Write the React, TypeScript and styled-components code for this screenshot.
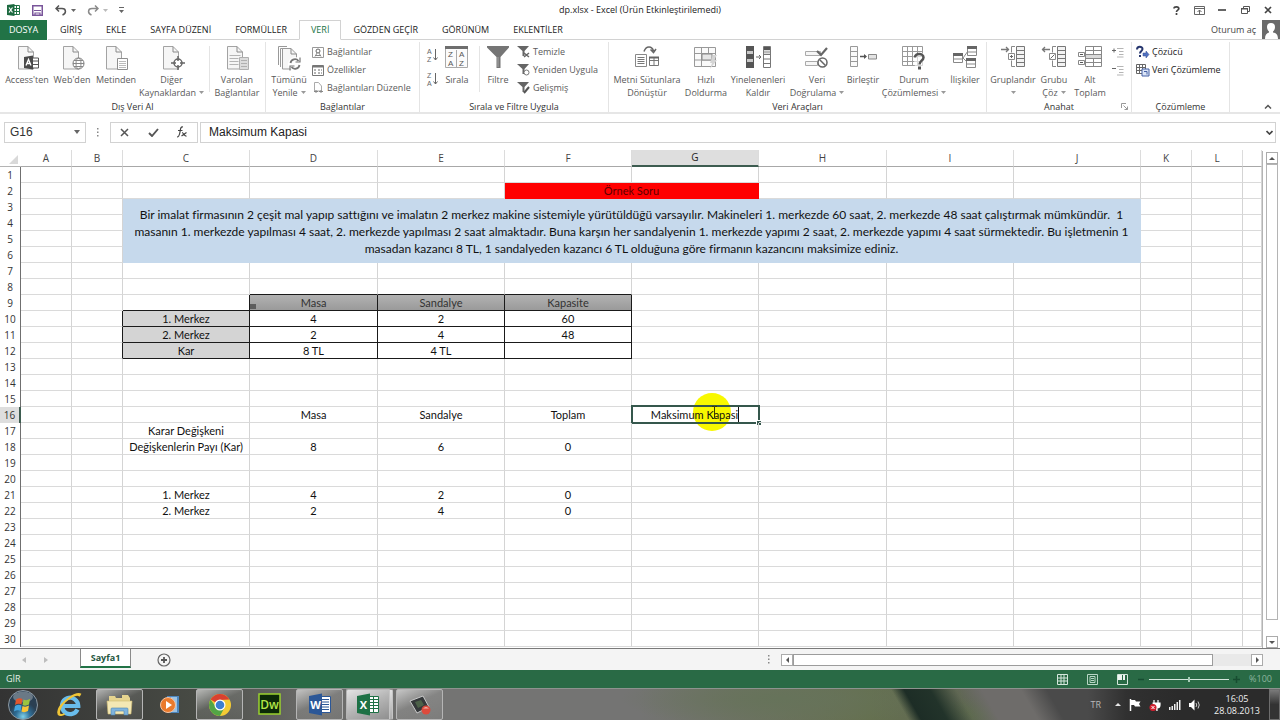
import React, { ReactNode } from 'react';
import styled, { createGlobalStyle, css } from 'styled-components';

const ui = '"Open Sans", "Noto Sans", sans-serif';
const sheetFont = 'Lato, "Open Sans", sans-serif';
const green = '#217346';

const GlobalStyle = createGlobalStyle`
  *, *::before, *::after { box-sizing: border-box; }
  body { margin: 0; background: #fff; font: 9px/12px ${ui}; color: #444; }
  button, input { font: inherit; color: inherit; margin: 0; padding: 0; border: 0; background: none; outline: none; }
  svg { display: block; flex: none; }
`;

const Window = styled.div`
  min-height: 100vh;
  display: flex;
  flex-direction: column;
`;

/* ---------- title bar ---------- */

const TitleBar = styled.header`
  height: 20px;
  display: grid;
  grid-template-columns: 1fr auto 1fr;
  align-items: center;
`;
const QuickAccess = styled.div`
  display: flex;
  align-items: center;
  padding-left: 7px;
`;
const QuickButton = styled.button<{ $gap?: number }>`
  display: flex;
  align-items: center;
  gap: 4px;
  margin-right: ${p => p.$gap ?? 0}px;
`;
const Title = styled.h1`
  margin: 0;
  font-size: 9px;
  font-weight: 400;
  color: #222;
`;
const WindowButtons = styled.div`
  display: flex;
  justify-content: flex-end;
  gap: 11px;
  padding-right: 6px;
`;
const IconButton = styled.button`
  display: flex;
  align-items: center;
  justify-content: center;
  min-width: 12px;
  min-height: 12px;
`;

/* ---------- ribbon tabs ---------- */

const TabRow = styled.nav`
  height: 20px;
  display: flex;
`;
const FileTab = styled.button`
  width: 47px;
  margin-right: 1px;
  background: ${green};
  color: #fff;
`;
const Tab = styled.button<{ $active?: boolean }>`
  padding: 0 12px;
  color: #222;
  border-bottom: 1px solid #d2d2d2;
  ${p => p.$active && css`
    padding: 0 11px;
    color: ${green};
    border: 1px solid #d2d2d2;
    border-bottom-color: #fff;
  `}
`;
const TabSpace = styled.div`
  flex: 1;
  display: flex;
  align-items: center;
  justify-content: flex-end;
  gap: 6px;
  border-bottom: 1px solid #d2d2d2;
`;

/* ---------- ribbon ---------- */

const Ribbon = styled.section`
  height: 74px;
  display: flex;
  padding-top: 2px;
  border-bottom: 2px solid #e6e6e6;
`;
const GroupBox = styled.div<{ $w: number }>`
  width: ${p => p.$w}px;
  flex: none;
  display: flex;
  flex-direction: column;
  position: relative;
  border-right: 1px solid #e4e4e4;
`;
const GroupBody = styled.div<{ $pad: number }>`
  height: 56px;
  flex: none;
  display: flex;
  padding-left: ${p => p.$pad}px;
`;
const GroupName = styled.div`
  padding-top: 3px;
  text-align: center;
  color: #333;
`;
const GroupLauncher = styled.button`
  position: absolute;
  right: 3px;
  bottom: 2px;
`;
const BigButtonBox = styled.button<{ $w: number }>`
  width: ${p => p.$w}px;
  flex: none;
  display: flex;
  flex-direction: column;
  align-items: center;
  padding-top: 4px;
  color: #5a5a5a;
  white-space: nowrap;
  line-height: 13px;
`;
const BigButtonText = styled.span`
  margin-top: 3px;
  display: flex;
  flex-direction: column;
  align-items: center;
`;
const BigLine = styled.span`
  display: flex;
  align-items: center;
  gap: 3px;
  min-height: 13px;
`;
const Divider = styled.span`
  width: 1px;
  margin: 4px 4px 6px 3px;
  background: #e4e4e4;
`;
const SmallColumn = styled.div<{ $ml?: number }>`
  display: flex;
  flex-direction: column;
  margin-left: ${p => p.$ml ?? 0}px;
`;
const SmallButton = styled.button<{ $strong?: boolean; $tall?: boolean }>`
  height: ${p => (p.$tall ? 24 : 18)}px;
  display: flex;
  align-items: center;
  gap: 3px;
  white-space: nowrap;
  padding-top: 2px;
  color: ${p => (p.$strong ? '#222' : '#5a5a5a')};
`;
const RibbonEnd = styled.div`
  flex: 1;
  display: flex;
  align-items: flex-end;
  justify-content: flex-end;
  padding-right: 6px;
`;

/* ---------- formula bar ---------- */

const FormulaRow = styled.section`
  height: 36px;
  display: flex;
  align-items: center;
  padding: 0 4px;
  font: 12px/16px "Liberation Sans", Arial, sans-serif;
  color: #333;
`;
const NameBox = styled.div`
  width: 82px;
  height: 21px;
  display: flex;
  align-items: center;
  padding: 0 2px 0 5px;
  border: 1px solid #d2d2d2;
`;
const NameInput = styled.input`
  flex: 1;
  min-width: 0;
`;
const BarDots = styled.span`
  width: 24px;
  display: flex;
  justify-content: center;
`;
const EditButtons = styled.div`
  width: 88px;
  height: 21px;
  display: flex;
  align-items: center;
  justify-content: space-between;
  padding: 0 9px 0 7px;
  border: 1px solid #d2d2d2;
`;
const FormulaBox = styled.div`
  flex: 1;
  height: 21px;
  margin-left: 2px;
  display: flex;
  align-items: center;
  padding-left: 8px;
  border: 1px solid #d2d2d2;
`;
const FormulaInput = styled.input`
  flex: 1;
  color: #222;
`;

/* ---------- worksheet ---------- */

const SheetArea = styled.main`
  flex: 1;
  display: flex;
  overflow: hidden;
  border-bottom: 1px solid #7a7a7a;
`;
const Grid = styled.table`
  flex: 1;
  width: 0;
  table-layout: fixed;
  border-collapse: separate;
  border-spacing: 0;
  align-self: flex-start;
  font: 11px/15px ${sheetFont};
  font-variant-ligatures: none;
  color: #111;
`;
const Col = styled.col<{ $w: number }>`
  width: ${p => p.$w}px;
`;
const Corner = styled.td`
  height: 17px;
  padding: 0;
  border-bottom: 1px solid #b4b4b4;
`;
const ColHead = styled.th<{ $active?: boolean }>`
  height: 17px;
  padding: 0;
  font: 10px/15px ${ui};
  color: #444;
  border-right: 1px solid #dcdcdc;
  border-bottom: 1px solid #a8a8a8;
  ${p => p.$active && css`
    background: #dedede;
    color: #222;
    border-bottom: 2px solid #3d5c50;
  `}
`;
const RowHead = styled.th<{ $active?: boolean }>`
  height: 16px;
  padding: 0;
  font: 10px/15px ${ui};
  color: #333;
  border-right: 1px solid #6f6f6f;
  ${p => p.$active && css`
    background: #dedede;
    border-right: 2px solid #3d5c50;
  `}
`;
type Fill = 'red' | 'blue' | 'head' | 'side';
const fills: Record<Fill, string> = {
  red: '#ff0000',
  blue: '#c6d9ec',
  head: 'linear-gradient(#b2b2b2, #9a9a9a)',
  side: '#d4d4d4',
};
const Cell = styled.td<{ $fill?: Fill; $r?: boolean; $b?: boolean }>`
  position: relative;
  height: 16px;
  padding: 0;
  text-align: center;
  white-space: nowrap;
  border-right: 1px solid ${p => (p.$r ? '#1a1a1a' : p.$fill === 'blue' || p.$fill === 'red' ? 'transparent' : '#d4d4d4')};
  border-bottom: 1px solid ${p => (p.$b ? '#1a1a1a' : p.$fill === 'blue' || p.$fill === 'red' ? 'transparent' : '#dadada')};
  background: ${p => (p.$fill ? fills[p.$fill] : 'none')};
  ${p => p.$fill === 'blue' && css`font-size: 12px; line-height: 17px; padding-top: 2px;`}
  ${p => p.$fill === 'red' && css`color: #5c0000;`}
  ${p => p.$fill === 'head' && css`color: #333;`}
`;
const DragMark = styled.i`
  position: absolute;
  left: 0;
  bottom: 1px;
  width: 6px;
  height: 5px;
  background: #5d5d5d;
`;
const PointerHalo = styled.i`
  position: absolute;
  left: 61px;
  top: -14px;
  width: 38px;
  height: 38px;
  border-radius: 50%;
  background: #f8f800;
`;
const PointerMark = styled.span`
  position: absolute;
  left: 79px;
  top: -1px;
`;
const SelectionFrame = styled.i`
  position: absolute;
  inset: -2px -2px -2px -1px;
  border: 2px solid #35574c;
  &::after {
    content: '';
    position: absolute;
    right: -3px;
    bottom: -3px;
    width: 5px;
    height: 5px;
    background: #35574c;
    border: 1px solid #fff;
    border-width: 1px 0 0 1px;
  }
`;
const EditLine = styled.div`
  position: relative;
  display: flex;
  justify-content: center;
  height: 15px;
`;
const CellInput = styled.input`
  field-sizing: content;
  height: 15px;
`;
const Caret = styled.i`
  width: 1px;
  background: #111;
`;
const VScroll = styled.div`
  width: 18px;
  flex: none;
  display: flex;
  flex-direction: column;
  align-items: center;
  padding: 1px 1px 0 2px;
  margin-top: 1px;
  border-left: 1px solid #b4b4b4;
`;
const ScrollButton = styled.button`
  width: 12px;
  height: 12px;
  flex: none;
  display: flex;
  align-items: center;
  justify-content: center;
  border: 1px solid #ababab;
  background: #fff;
`;
const VThumb = styled.div`
  width: 12px;
  flex: 1;
  margin-bottom: 16px;
  border: 1px solid #b4b4b4;
`;

/* ---------- sheet tabs and horizontal scroll ---------- */

const SheetTabs = styled.div`
  height: 21px;
  display: flex;
  background: #f4f4f4;
`;
const SheetNav = styled.div`
  width: 80px;
  display: flex;
  align-items: center;
  gap: 18px;
  padding-left: 22px;
`;
const SheetTab = styled.button`
  width: 51px;
  height: 19px;
  background: #fff;
  color: #26573f;
  font-weight: 700;
  border: 1px solid #8a8a8a;
  border-top: 0;
  border-bottom: 2px solid ${green};
`;
const AddSheet = styled.button`
  margin-left: 26px;
`;
const HScroll = styled.div`
  width: calc(40% + 5px);
  margin-left: auto;
  display: flex;
  align-items: center;
  padding-right: 17px;
`;
const HScrollGrip = styled(IconButton)`
  margin-right: 6px;
`;
const HTrack = styled.div`
  flex: 1;
  height: 12px;
  background: #e9e9e9;
  padding-right: 38px;
`;
const HThumb = styled.div`
  height: 12px;
  background: #fff;
  border: 1px solid #9c9c9c;
`;

/* ---------- status bar ---------- */

const StatusBar = styled.footer`
  height: 18px;
  display: flex;
  align-items: center;
  padding: 0 8px 0 6px;
  background: #296a45;
  color: #e3efe8;
`;
const ViewButtons = styled.div`
  margin-left: auto;
  display: flex;
  gap: 18px;
  margin-right: 10px;
`;
const ZoomSlider = styled.input`
  appearance: none;
  width: 80px;
  height: 6px;
  margin: 0 4px;
  background: linear-gradient(#d5e6dc, #d5e6dc) center / 80px 1px no-repeat;
  &::-webkit-slider-thumb {
    appearance: none;
    width: 2px;
    height: 5px;
    background: #a9cdb8;
  }
`;
const ZoomSign = styled.button`
  color: #14442b;
`;
const ZoomValue = styled.span`
  margin-left: 9px;
  color: #8fb59f;
`;

/* ---------- task bar ---------- */

const TaskBar = styled.footer`
  height: 32px;
  display: flex;
  border-top: 1px solid #8d938f;
  background:
    linear-gradient(90deg, transparent 85%, rgba(42, 42, 42, 0.8) 88%, #2b2b2b 92%),
    linear-gradient(60deg, transparent 80%, #4a4a4a 82%),
    linear-gradient(60deg, transparent 75%, #6e6c6a 77%),
    linear-gradient(60deg, transparent 70%, #1d2d26 71%, #22332a 73%, transparent 75%),
    radial-gradient(ellipse 160px 30px at 61% 30%, #66735a, transparent),
    radial-gradient(ellipse 60px 18px at 77% 80%, #5d6b4d, transparent),
    linear-gradient(90deg, #333 0, #474a44 15%, #6a6a68 24%, #747473 34%, #747473 50%, #65704f 68%, #5d6355 78%, #333 90%);
`;
const TaskButton = styled.button<{ $open?: boolean; $stack?: boolean }>`
  width: 47px;
  margin-right: 3px;
  display: flex;
  align-items: center;
  justify-content: center;
  border: 1px solid transparent;
  border-radius: 2px;
  ${p => p.$open && css`
    border-color: #b5b5b5;
    background: linear-gradient(155deg, rgba(255, 255, 255, 0.6), rgba(255, 255, 255, 0.12) 45%, rgba(255, 255, 255, 0.06));
  `}
  ${p => p.$stack && css`
    border-right: 4px double #c4c4c4;
    background: linear-gradient(155deg, #e4e4e4, #b5b5b5 50%, #8f8f8f);
  `}
`;
const StartButton = styled.button`
  width: 46px;
  display: flex;
  align-items: center;
  justify-content: center;
`;
const Tray = styled.div`
  margin-left: auto;
  display: flex;
  align-items: center;
  gap: 8px;
  color: #d9d9d9;
`;
const Language = styled.span`
  margin-right: 6px;
  color: #b8b8b8;
`;
const Clock = styled.time`
  width: 48px;
  margin-left: 4px;
  text-align: center;
  color: #f0f0f0;
`;
const ShowDesktop = styled.button`
  width: 11px;
  align-self: stretch;
  border: 1px solid #6d6d6d;
  background: linear-gradient(#7a7a7a, #333 50%);
`;

/* ---------- drawings ---------- */

const Down = ({ c = '#999' }: { c?: string }) => (
  <svg width="5" height="3" viewBox="0 0 5 3"><path d="M0 0h5L2.500 3z" fill={c} /></svg>
);
const Icon = ({ children, w = 24, h = 24 }: { children: ReactNode; w?: number; h?: number }) => (
  <svg width={w} height={h} viewBox={`0 0 ${w} ${h}`} fill="none" stroke="#8a8a8a" overflow="visible">{children}</svg>
);
const Doc = ({ x = 3 }: { x?: number }) => (
  <g transform={`translate(${x} 0)`}>
    <path d="M.5.500H10L15.500 6v17H.500z" fill="#f6f6f6" stroke="#a3a3a3" />
    <path d="M10 .500V6h5.500" stroke="#8a8a8a" />
  </g>
);

const AccessIcon = () => (
  <Icon><Doc /><path d="M17 12h6.500v10H17M17 15h6M17 18.500h6" fill="#fff" stroke="#555" />
    <path d="M9 11l9-1.500v14L9 22z" fill="#4a4a4a" stroke="none" />
    <path d="M11 19.500l2.500-6 2.500 6M12 17.500h3" stroke="#fff" strokeWidth="1.300" /></Icon>
);
const WebIcon = () => (
  <Icon><Doc /><circle cx="18.500" cy="17.500" r="5.500" fill="#fff" stroke="#777" />
    <ellipse cx="18.500" cy="17.500" rx="2.500" ry="5.500" stroke="#888" /><path d="M13 17.500h11M14 14.500h9M14 20.500h9" stroke="#888" /></Icon>
);
const TextIcon = () => (
  <Icon><Doc x={2} /><path d="M13.500 12.500h10v11h-10z" fill="#fff" stroke="#8f8f8f" /><path d="M15 15.500h7M15 17.500h7M15 19.500h7M15 21.500h7" stroke="#bbb" /></Icon>
);
const SourcesIcon = () => (
  <Icon><Doc /><circle cx="18" cy="17" r="4" fill="#fff" stroke="#666" strokeWidth="1.500" /><path d="M18 10v5M18 19v5M11 17h5M20 17h5" stroke="#666" strokeWidth="1.500" /></Icon>
);
const ExistingIcon = () => (
  <Icon><Doc x={2} /><path d="M4.500 9.500h11M4.500 12.500h9M4.500 15.500h9M4.500 18.500h9" stroke="#b5b5b5" /><path d="M14.500 11.500h9v12h-9z" fill="#dcdcdc" stroke="#b0b0b0" />
    <path d="M16 14.500h6M16 17.500h6M16 20.500h6" stroke="#b0b0b0" /></Icon>
);
const RefreshIcon = () => (
  <Icon><path d="M1.500 19V.500H10" stroke="#999" /><path d="M3.500 21V2.500H12" stroke="#999" /><g transform="translate(5 2)"><path d="M.5.500H9L14.500 6v15H.500z" fill="#f6f6f6" stroke="#999" /><path d="M9 .500V6h5.500" /></g>
    <circle cx="18" cy="18" r="7" fill="#fff" stroke="none" />
    <path d="M13.500 17a4.500 4.500 0 0 1 8-2M22.500 19a4.500 4.500 0 0 1-8 2" stroke="#777" strokeWidth="1.800" /><path d="M23 11.500v4.500h-4.500M13 24.500V20h4.500" stroke="#777" strokeWidth="1.200" /></Icon>
);
const ConnIcon = () => (
  <Icon w={12} h={11}><path d="M.5.500h11v10H.500z" stroke="#999" /><circle cx="6" cy="4" r="2" stroke="#666" /><path d="M3 9.500L5 6M9 9.500L7 6M3 8.500h6" stroke="#888" /></Icon>
);
const PropsIcon = () => (
  <Icon w={12} h={11}><path d="M.5.500h11v10H.500z" stroke="#777" /><path d="M1 1.500h10" stroke="#777" strokeWidth="2" /><path d="M2 5h2M2 8h2M6 5h4M6 8h4" stroke="#666" strokeDasharray="2 1" /></Icon>
);
const EditLinksIcon = () => (
  <Icon w={12} h={12}><path d="M2.500.500h4L9.500 4v5h-7z" stroke="#aaa" /><path d="M2 9.500h4M7 9.500h4M4 8v3M9 8v3" stroke="#888" /></Icon>
);
const SortLetters = ({ a, b }: { a: string; b: string }) => (
  <svg width="12" height="18" viewBox="0 0 12 18" fontFamily="Liberation Sans" fontSize="7" fill="#666">
    <text x="1" y="8">{a}</text><text x="1" y="16">{b}</text>
    <path d="M9.500 3v11M7.500 11.500l2 2.500 2-2.500" fill="none" stroke="#666" />
  </svg>
);
const SortIcon = () => (
  <svg width="24" height="24" viewBox="0 0 24 24" fontFamily="Liberation Sans" fontSize="8" fill="#555">
    <path d="M.5 1.500h22v20H.500zM11.500 4v17.500" fill="#fbfbfb" stroke="#aaa" /><path d="M0 0h23v3H0z" fill="#6e6e6e" />
    <text x="3" y="11">Z</text><text x="3" y="20">A</text><text x="14" y="11">A</text><text x="14" y="20">Z</text>
  </svg>
);
const FunnelIcon = () => (
  <Icon><path d="M1 0h22v1.500L14.500 11v11h-4V11L1 1.500z" fill="#757575" stroke="none" /><path d="M12 11v10" stroke="#a8a8a8" /></Icon>
);
const MiniFunnel = ({ children }: { children: ReactNode }) => (
  <Icon w={13} h={12}><path d="M0 0h12L7.500 5v5h-2V5z" fill="#666" stroke="none" />{children}</Icon>
);
const TextColsIcon = () => (
  <Icon><path d="M.5 8.500h11v12h-11z" fill="#fff" stroke="#888" /><path d="M2.500 11.500h7M2.500 13.500h7M2.500 15.500h7M2.500 17.500h7" stroke="#777" /><path d="M14.500 11.500h9v8h-9zM14.500 14.500h9M19 11v8" stroke="#777" />
    <path d="M14 10.500h10v2H14z" fill="#666" stroke="none" /><path d="M9 5.500C11-.500 17-.500 18.500 5M15.500 3.500l3 3 2.500-3.500" stroke="#666" strokeWidth="1.500" /></Icon>
);
const FlashIcon = () => (
  <Icon><path d="M.5 1.500h21v19H.500zM.500 7.500h21M.500 14h21M7.500 1v19M14.500 1v13" stroke="#999" fill="#fafafa" /><path d="M8 8h10v6H8z" fill="#e6e6e6" stroke="#888" /><path d="M19 9h4l-3 5h3l-7 9 2-6h-2z" fill="#d4d4d4" stroke="none" /></Icon>
);
const DuplicatesIcon = () => (
  <Icon><path d="M0 0h8v22H0z" fill="#555" stroke="none" /><path d="M1 5h6v3H1zM1 13h6v3H1z" fill="#c9c9c9" stroke="none" /><path d="M10 11h5M13 9l2 2-2 2" stroke="#666" />
    <path d="M17.500.500h7v21h-7zM17 8.500h8M17 13h8M17 17.500h8" fill="#fff" stroke="#777" /><path d="M18 1h6v3h-6z" fill="#555" stroke="none" /><path d="M18 4.500h6v3h-6z" fill="#bbb" stroke="none" /></Icon>
);
const ValidationIcon = () => (
  <Icon><path d="M.5 5.500h15v4H.500zM.500 15.500h12v4H.500z" fill="#f6f6f6" stroke="#aaa" /><path d="M12 5l4 4 6-7" stroke="#666" strokeWidth="2.200" /><circle cx="17.500" cy="16.500" r="4.500" fill="#fff" stroke="#666" strokeWidth="1.500" /><path d="M14.500 13.500l6 6" stroke="#666" strokeWidth="1.500" /></Icon>
);
const ConsolidateIcon = () => (
  <Icon><path d="M-.500.500h7v20h-7zM-.500 5.500h7M-.500 10.500h7M-.500 15.500h7" fill="#fafafa" stroke="#999" /><path d="M9 10.500h6" stroke="#555" strokeWidth="1.500" /><path d="M13 8l3 2.500-3 2.500z" fill="#555" stroke="none" /><path d="M17.500 8.500h8v4.500h-8z" fill="#e3e3e3" stroke="#888" /></Icon>
);
const WhatIfIcon = () => (
  <Icon><path d="M.500.500h20v19H.500zM.500 5.500h20M.500 10.500h20M.500 15.500h20M5.500 1v19M10.500 1v19M15.500 1v19" stroke="#999" /><path d="M11 7h13v14H13z" fill="#fff" stroke="none" opacity=".6" />
    <path d="M13 11.500c0-5 8.500-4.500 8.500 0 0 3-4 3.500-4 7" stroke="#555" strokeWidth="2.500" /><path d="M16 20.500h3v3h-3z" fill="#555" stroke="none" /></Icon>
);
const TinyTable = ({ x, y }: { x: number; y: number }) => (
  <g transform={`translate(${x} ${y})`}><path d="M.500.500h9v9h-9zM.500 6h9" fill="#fff" stroke="#888" /><path d="M0 0h10v3H0z" fill="#666" stroke="none" /></g>
);
const RelationsIcon = () => (
  <Icon><path d="M10 12l5-7M10 12l5 5" /><TinyTable x={0} y={7} /><TinyTable x={14} y={0} /><TinyTable x={13} y={12} /></Icon>
);
const GroupIcon = ({ un }: { un?: boolean }) => (
  <Icon><path d={un ? 'M8 3.500H0M3 1L.500 3.500 3 6' : 'M0 3.500h8M5 1l2.500 2.500L5 6'} stroke="#777" strokeWidth="1.300" />
    <path d="M15.500.500h8v20h-8zM15.500 4.500h8M15.500 8.500h8M15.500 12.500h8M15.500 16.500h8" fill="#f3f3f3" stroke="#777" /><path d="M14 .500h-3.500v6M14 20.500h-3.500v-6" stroke="#888" /><path d="M7.500 7.500h6v6h-6z" fill="#fff" />
    <path d={un ? 'M8.500 12.500l4-4' : 'M10.500 9v3M9 10.500h3'} stroke="#666" /></Icon>
);
const SubtotalIcon = () => (
  <Icon><path d="M7.500.500h16v20h-16zM7.500 4.500h16M7.500 8.500h16M7.500 12.500h16M7.500 16.500h16M15.500.500v20" stroke="#888" /><path d="M.500 6.500h6v4h-6zM.500 14.500h6v4h-6z" fill="#fff" stroke="#888" /><path d="M2 8.500h3M2 16.500h3" stroke="#555" /><path d="M8 9h15v3H8z" fill="#d9d9d9" stroke="none" /></Icon>
);
const DetailIcon = ({ minus }: { minus?: boolean }) => (
  <Icon w={12} h={11}><path d={minus ? 'M0 3.500h4' : 'M0 3.500h4M2 1.500v4'} stroke="#666" /><path d="M5 1.500h6.500M7 4.500h4.500M7 7.500h4.500M5 10h6.500" stroke="#b5b5b5" /></Icon>
);
const SolverIcon = () => (
  <Icon w={13} h={12}><path d="M1 3.500C1 0 6.500 0 6.500 3c0 2-2.500 2-2.500 4.500" stroke="#26366e" strokeWidth="2" /><path d="M3 9h2v2H3z" fill="#26366e" stroke="none" /><path d="M7 7h3V5l3 3.500-3 3.500v-2H7z" fill="#5271c0" stroke="#2f4a92" strokeWidth=".5" /></Icon>
);
const AnalysisIcon = () => (
  <Icon w={13} h={12}><path d="M.500.500h9v9h-9zM3.500.500v9M6.500.500v9M.500 3.500h9M.500 6.500h9" stroke="#666" /><path d="M6 5h7v7H6z" fill="#dbe5f7" stroke="#4560a5" /><path d="M8 7.500h3v3" stroke="#4560a5" /></Icon>
);
const ExcelMark = () => (
  <svg width="13" height="12" viewBox="0 0 13 12"><path d="M7 1.500h5.500v9H7M7 4.500h5M7 7.500h5M9.500 2v8" fill="#fff" stroke="#217346" /><path d="M0 1l7.500-1v12L0 11z" fill="#1d6a40" /><path d="M2 3.500l3.500 5M5.500 3.500L2 8.500" stroke="#fff" strokeWidth="1.200" /></svg>
);
const SaveMark = () => (
  <svg width="11" height="11" viewBox="0 0 11 11"><path d="M.750.750h9.500v9.500H.750z" fill="#fff" stroke="#79559a" strokeWidth="1.500" /><path d="M2 5.500h7M3 10V8h5v2" fill="none" stroke="#79559a" strokeWidth="1.200" /></svg>
);
const UndoMark = ({ flip }: { flip?: boolean }) => (
  <svg width="12" height="11" viewBox="0 0 12 11"><path transform={flip ? 'matrix(-1 0 0 1 12 0)' : undefined} d="M4 .500L1 3.500l3 3M1 3.500h6c4.500 0 4.500 5 .500 6.500" fill="none" stroke={flip ? '#8a8a8a' : '#555'} strokeWidth="1.500" /></svg>
);
const DotsMark = () => (
  <svg width="2" height="9" viewBox="0 0 2 9"><path d="M0 0h1.500v1.500H0zM0 3.500h1.500V5H0zM0 7h1.500v1.500H0z" fill="#888" /></svg>
);

const OrbIcon = () => (
  <svg width="32" height="30" viewBox="0 0 32 30">
    <defs><radialGradient id="orb" cx=".5" cy=".9"><stop offset="0" stopColor="#7fd0e8" /><stop offset=".5" stopColor="#2f6f98" /><stop offset="1" stopColor="#2a3f52" /></radialGradient></defs>
    <circle cx="16" cy="15" r="14.500" fill="url(#orb)" stroke="#8d9aa4" /><ellipse cx="16" cy="7" rx="10" ry="5.500" fill="#fff" opacity=".3" />
    <path d="M9 9.500q3.500-2 6.500-.5l-1 5.500q-3-1.500-6.500.5z" fill="#e2562d" /><path d="M16.500 9.500q3 1.500 6.500-.5l-1 5.500q-3.500 2-6.500.5z" fill="#9bc53f" />
    <path d="M8 16q3.500-2 6.500-.5l-1 5.500q-3-1.500-6.500.5z" fill="#45a5de" /><path d="M15.500 16q3 1.500 6.500-.5l-1 5.500q-3.500 2-6.500.5z" fill="#fac536" />
  </svg>
);
const IeIcon = () => (
  <svg width="26" height="24" viewBox="0 0 26 24"><path d="M20.500 16.500A8.200 8.200 0 1 1 21.300 13H7" fill="none" stroke="#69bdec" strokeWidth="4.200" /><path d="M24 1.500C19-1 5 8 2.500 17c-1.500 5 1.500 6 5 4-9 4-8-5 0-12C14 3.500 20 0 23 3" fill="none" stroke="#f0c536" strokeWidth="1.800" /></svg>
);
const FolderIcon = () => (
  <svg width="27" height="23" viewBox="0 0 27 23"><path d="M3 3h6l1 2h6V2h6l2 3v14H3z" fill="#e6d48f" /><path d="M1 8h25l-1 13H2z" fill="#f4e8b4" stroke="#cdb970" strokeWidth=".6" /><path d="M5 22v-6q0-1 1-1h15q1 0 1 1v6h-4v-4H9v4z" fill="#7fb4dd" stroke="#4b84b4" strokeWidth=".6" /></svg>
);
const MediaIcon = () => (
  <svg width="22" height="20" viewBox="0 0 22 20"><path d="M8 1h12v17H8z" fill="#4c86bd" /><path d="M12 2h6v15h-6z" fill="#9cc3e4" /><circle cx="9" cy="10" r="7.500" fill="#ea7a2c" stroke="#f5c3a0" /><path d="M7 6l6 4-6 4z" fill="#fff" /></svg>
);
const ChromeIcon = () => (
  <svg width="24" height="24" viewBox="0 0 24 24"><circle cx="12" cy="12" r="11" fill="#f3cb35" /><path d="M12 12L2.500 6.500A11 11 0 0 1 21.500 6.500L12 7z" fill="#d9402f" /><path d="M2.500 6.500A11 11 0 0 0 12 23l4.500-8.500L8 14z" fill="#52a545" /><circle cx="12" cy="12" r="5.500" fill="#fff" /><circle cx="12" cy="12" r="4.300" fill="#3c7fd0" /></svg>
);
const DwIcon = () => (
  <svg width="24" height="23" viewBox="0 0 24 23"><path d="M1 1h21v20H1z" fill="#0c2a08" stroke="#9ad22e" strokeWidth="1.500" /><text x="11.500" y="16" textAnchor="middle" fontFamily="Open Sans" fontWeight="600" fontSize="12" fill="#b2e648">Dw</text></svg>
);
const OfficeIcon = ({ letter, color, word }: { letter: string; color: string; word?: boolean }) => (
  <svg width="24" height="23" viewBox="0 0 24 23"><path d="M12 3.500h10.500v16H12" fill="#fff" stroke={color} />
    <path d={word ? 'M13 6.500h8M13 9h8M13 11.500h8M13 14h8M13 16.500h8' : 'M13 6.500h9M13 9.500h9M13 12.500h9M13 15.500h9M17.500 4v15'} stroke={color} fill="none" />
    <path d="M1 3l13-2.500v22L1 20z" fill={color} /><text x="7.500" y="16" textAnchor="middle" fontFamily="Open Sans" fontWeight="700" fontSize="11" fill="#fff">{letter}</text></svg>
);
const RecorderIcon = () => (
  <svg width="24" height="20" viewBox="0 0 24 20"><path d="M2 6l13-5 6 11-12 6z" fill="#35383a" stroke="#c9c9c9" /><path d="M7 7l6-2 3 5-6 3z" fill="#4c6148" /><circle cx="18" cy="15" r="4.500" fill="#dd4a3c" /><path d="M15 13.500q3-3 6 0z" fill="#f6b3aa" /></svg>
);

/* ---------- data ---------- */

type BigItem = { icon: ReactNode; lines: string[]; w: number; menu?: boolean };

const BigButton = ({ icon, lines, w, menu }: BigItem) => (
  <BigButtonBox $w={w}>
    {icon}
    <BigButtonText>
      {lines.map((l, i) => (
        <BigLine key={i}>{l}{menu && i === lines.length - 1 && <Down />}</BigLine>
      ))}
    </BigButtonText>
  </BigButtonBox>
);

const dataTools: BigItem[] = [
  { icon: <TextColsIcon />, lines: ['Metni Sütunlara', 'Dönüştür'], w: 70 },
  { icon: <FlashIcon />, lines: ['Hızlı', 'Doldurma'], w: 48 },
  { icon: <DuplicatesIcon />, lines: ['Yinelenenleri', 'Kaldır'], w: 56 },
  { icon: <ValidationIcon />, lines: ['Veri', 'Doğrulama'], w: 62, menu: true },
  { icon: <ConsolidateIcon />, lines: ['Birleştir'], w: 30 },
  { icon: <WhatIfIcon />, lines: ['Durum', 'Çözümlemesi'], w: 72, menu: true },
  { icon: <RelationsIcon />, lines: ['İlişkiler'], w: 30 },
];

const cols = ['A', 'B', 'C', 'D', 'E', 'F', 'G', 'H', 'I', 'J', 'K', 'L', ''];
const widths = [21, 51, 51, 127, 128, 127, 127, 127, 128, 127, 127, 51, 51];

const values: Record<string, string> = {
  F2: 'Örnek Soru',
  D9: 'Masa', E9: 'Sandalye', F9: 'Kapasite',
  C10: '1. Merkez', D10: '4', E10: '2', F10: '60',
  C11: '2. Merkez', D11: '2', E11: '4', F11: '48',
  C12: 'Kar', D12: '8 TL', E12: '4 TL',
  D16: 'Masa', E16: 'Sandalye', F16: 'Toplam',
  C17: 'Karar Değişkeni',
  C18: 'Değişkenlerin Payı (Kar)', D18: '8', E18: '6', F18: '0',
  C21: '1. Merkez', D21: '4', E21: '2', F21: '0',
  C22: '2. Merkez', D22: '2', E22: '4', F22: '0',
};

const boxed = (r: number, c: number) =>
  (r === 9 && c >= 3 && c <= 5) || (r >= 10 && r <= 12 && c >= 2 && c <= 5);
const fillOf = (r: number, c: number): Fill | undefined => {
  if (r === 2 && c === 5) return 'red';
  if (r === 3 && c === 2) return 'blue';
  if (r === 9 && c >= 3 && c <= 5) return 'head';
  if (r >= 10 && r <= 12 && c === 2) return 'side';
  return undefined;
};
const covered = (r: number, c: number) =>
  (r === 2 && c === 6) || (r >= 3 && r <= 6 && c >= 2 && c <= 9 && !(r === 3 && c === 2));

const ActiveCell = () => (
  <>
    <PointerHalo />
    <SelectionFrame />
    <EditLine>
      <CellInput aria-label="G16" defaultValue="Maksimum Kapasi" />
      <Caret />
    </EditLine>
    <PointerMark>
      <svg width="7" height="13" viewBox="0 0 7 13"><path d="M1 .500h2l.5 1 .500-1h2M3.500 1v11M1 12.500h2l.5-1 .500 1h2" fill="none" stroke="#3a3a00" /></svg>
    </PointerMark>
  </>
);

const Row = ({ r }: { r: number }) => (
  <tr>
    <RowHead scope="row" $active={r === 16}>{r}</RowHead>
    {cols.map((name, c) => {
      if (covered(r, c)) return null;
      const fill = fillOf(r, c);
      return (
        <Cell
          key={c}
          $fill={fill}
          $r={boxed(r, c) || boxed(r, c + 1)}
          $b={boxed(r, c) || boxed(r + 1, c)}
          colSpan={fill === 'red' ? 2 : fill === 'blue' ? 8 : 1}
          rowSpan={fill === 'blue' ? 4 : 1}
        >
          {values[name + r]}
          {fill === 'blue' && (
            <>
              Bir imalat firmasının 2 çeşit mal yapıp sattığını ve imalatın 2 merkez makine sistemiyle yürütüldüğü varsayılır. Makineleri 1. merkezde 60 saat, 2. merkezde 48 saat çalıştırmak mümkündür.&nbsp; 1<br />
              masanın 1. merkezde yapılması 4 saat, 2. merkezde yapılması 2 saat almaktadır. Buna karşın her sandalyenin 1. merkezde yapımı 2 saat, 2. merkezde yapımı 4 saat sürmektedir. Bu işletmenin 1<br />
              masadan kazancı 8 TL, 1 sandalyeden kazancı 6 TL olduğuna göre firmanın kazancını maksimize ediniz.
            </>
          )}
          {r === 9 && c === 3 && <DragMark />}
          {r === 16 && c === 6 && <ActiveCell />}
        </Cell>
      );
    })}
  </tr>
);

export default function App() {
  return (
    <Window>
      <GlobalStyle />
      <TitleBar>
        <QuickAccess>
          <QuickButton aria-label="Excel" $gap={12}><ExcelMark /></QuickButton>
          <QuickButton aria-label="Kaydet" $gap={12}><SaveMark /></QuickButton>
          <QuickButton aria-label="Geri al" $gap={11}><UndoMark /><Down c="#666" /></QuickButton>
          <QuickButton aria-label="Yinele" $gap={11}><UndoMark flip /><Down c="#bbb" /></QuickButton>
          <QuickButton aria-label="Özelleştir">
            <svg width="5" height="6" viewBox="0 0 5 6"><path d="M0 0h5v1H0zM0 3h5L2.500 6z" fill="#666" /></svg>
          </QuickButton>
        </QuickAccess>
        <Title>dp.xlsx - Excel (Ürün Etkinleştirilemedi)</Title>
        <WindowButtons>
          <IconButton aria-label="Yardım">
            <svg width="7" height="9" viewBox="0 0 7 9"><path d="M1 2.500C1.200.300 5.800.300 5.800 2.700c0 1.500-2.300 1.500-2.300 3.300M3.500 7v2" fill="none" stroke="#444" strokeWidth="1.700" /></svg>
          </IconButton>
          <IconButton aria-label="Şerit görüntüleme">
            <svg width="11" height="9" viewBox="0 0 11 9"><path d="M.500.500h10v8H.500zM.500 2.500h10M5.500 8V4M3.500 6l2-2 2 2" fill="none" stroke="#666" /></svg>
          </IconButton>
          <IconButton aria-label="Simge durumu">
            <svg width="8" height="2" viewBox="0 0 8 2"><path d="M0 0h8v2H0z" fill="#666" /></svg>
          </IconButton>
          <IconButton aria-label="Geri yükle">
            <svg width="9" height="8" viewBox="0 0 9 8"><path d="M.500 2.500h6v5h-6zM2.500 2V.500h6v5H7" fill="none" stroke="#555" /><path d="M0 2h7v1.500H0z" fill="#555" /></svg>
          </IconButton>
          <IconButton aria-label="Kapat">
            <svg width="8" height="8" viewBox="0 0 8 8"><path d="M1 1l6 6M7 1L1 7" stroke="#444" strokeWidth="1.700" /></svg>
          </IconButton>
        </WindowButtons>
      </TitleBar>

      <TabRow>
        <FileTab>DOSYA</FileTab>
        <Tab>GİRİŞ</Tab>
        <Tab>EKLE</Tab>
        <Tab>SAYFA DÜZENİ</Tab>
        <Tab>FORMÜLLER</Tab>
        <Tab $active>VERİ</Tab>
        <Tab>GÖZDEN GEÇİR</Tab>
        <Tab>GÖRÜNÜM</Tab>
        <Tab>EKLENTİLER</Tab>
        <TabSpace>
          <button>Oturum aç</button>
          <svg width="18" height="19" viewBox="0 0 18 19"><path d="M0 0h18v19H0z" fill="#6a6a6a" /><path d="M9 3a4 4 0 0 1 4 4c0 2-1 4-2 4.500v1c3 .5 5 2 5 6.500H3c0-4 1.500-6 4-6.500v-1C6 11 5 9 5 7a4 4 0 0 1 4-4z" fill="#fff" /></svg>
        </TabSpace>
      </TabRow>

      <Ribbon>
        <GroupBox $w={266}>
          <GroupBody $pad={5}>
            <BigButton icon={<AccessIcon />} lines={["Access'ten"]} w={44} />
            <BigButton icon={<WebIcon />} lines={["Web'den"]} w={46} />
            <BigButton icon={<TextIcon />} lines={['Metinden']} w={42} />
            <BigButton icon={<SourcesIcon />} lines={['Diğer', 'Kaynaklardan']} w={69} menu />
            <Divider />
            <BigButton icon={<ExistingIcon />} lines={['Varolan', 'Bağlantılar']} w={46} />
          </GroupBody>
          <GroupName>Dış Veri Al</GroupName>
        </GroupBox>
        <GroupBox $w={154}>
          <GroupBody $pad={4}>
            <BigButton icon={<RefreshIcon />} lines={['Tümünü', 'Yenile']} w={38} menu />
            <SmallColumn $ml={4}>
              <SmallButton><ConnIcon />Bağlantılar</SmallButton>
              <SmallButton><PropsIcon />Özellikler</SmallButton>
              <SmallButton><EditLinksIcon />Bağlantıları Düzenle</SmallButton>
            </SmallColumn>
          </GroupBody>
          <GroupName>Bağlantılar</GroupName>
        </GroupBox>
        <GroupBox $w={189}>
          <GroupBody $pad={6}>
            <SmallColumn>
              <SmallButton $tall aria-label="A'dan Z'ye sırala"><SortLetters a="A" b="Z" /></SmallButton>
              <SmallButton $tall aria-label="Z'den A'ya sırala"><SortLetters a="Z" b="A" /></SmallButton>
            </SmallColumn>
            <BigButton icon={<SortIcon />} lines={['Sırala']} w={38} />
            <Divider />
            <BigButton icon={<FunnelIcon />} lines={['Filtre']} w={28} />
            <SmallColumn $ml={5}>
              <SmallButton><MiniFunnel><path d="M7 7l5 4M12 7l-5 4" stroke="#666" strokeWidth="1.500" /></MiniFunnel>Temizle</SmallButton>
              <SmallButton><MiniFunnel><circle cx="9.500" cy="8.500" r="2.500" fill="#fff" stroke="#777" /></MiniFunnel>Yeniden Uygula</SmallButton>
              <SmallButton><MiniFunnel><path d="M7 11l5-6" stroke="#555" strokeWidth="2" /></MiniFunnel>Gelişmiş</SmallButton>
            </SmallColumn>
          </GroupBody>
          <GroupName>Sırala ve Filtre Uygula</GroupName>
        </GroupBox>
        <GroupBox $w={378}>
          <GroupBody $pad={3}>
            {dataTools.map(t => <BigButton key={t.lines[0]} {...t} />)}
          </GroupBody>
          <GroupName>Veri Araçları</GroupName>
        </GroupBox>
        <GroupBox $w={145}>
          <GroupBody $pad={3}>
            <BigButton icon={<GroupIcon />} lines={['Gruplandır', '']} w={46} menu />
            <BigButton icon={<GroupIcon un />} lines={['Grubu', 'Çöz']} w={36} menu />
            <BigButton icon={<SubtotalIcon />} lines={['Alt', 'Toplam']} w={36} />
            <SmallColumn $ml={4}>
              <SmallButton aria-label="Ayrıntıyı göster"><DetailIcon /></SmallButton>
              <SmallButton aria-label="Ayrıntıyı gizle"><DetailIcon minus /></SmallButton>
            </SmallColumn>
          </GroupBody>
          <GroupName>Anahat</GroupName>
          <GroupLauncher aria-label="Anahat ayarları">
            <svg width="7" height="7" viewBox="0 0 7 7"><path d="M.500 5V.500H5M2.500 2.500l4 4M6.500 3.500v3h-3" fill="none" stroke="#999" /></svg>
          </GroupLauncher>
        </GroupBox>
        <GroupBox $w={98}>
          <GroupBody $pad={4}>
            <SmallColumn>
              <SmallButton $strong><SolverIcon />Çözücü</SmallButton>
              <SmallButton $strong><AnalysisIcon />Veri Çözümleme</SmallButton>
            </SmallColumn>
          </GroupBody>
          <GroupName>Çözümleme</GroupName>
        </GroupBox>
        <RibbonEnd>
          <IconButton aria-label="Şeridi daralt">
            <svg width="8" height="5" viewBox="0 0 8 5"><path d="M1 4.500l3-3 3 3" fill="none" stroke="#555" strokeWidth="1.500" /></svg>
          </IconButton>
        </RibbonEnd>
      </Ribbon>

      <FormulaRow>
        <NameBox>
          <NameInput aria-label="Ad kutusu" defaultValue="G16" />
          <IconButton aria-label="Ad listesi"><svg width="6" height="4" viewBox="0 0 6 4"><path d="M0 0h6L3 4z" fill="#666" /></svg></IconButton>
        </NameBox>
        <BarDots><DotsMark /></BarDots>
        <EditButtons>
          <IconButton aria-label="İptal"><svg width="9" height="9" viewBox="0 0 9 9"><path d="M1 1l7 7M8 1L1 8" stroke="#555" strokeWidth="1.500" /></svg></IconButton>
          <IconButton aria-label="Gir"><svg width="11" height="9" viewBox="0 0 11 9"><path d="M1 5l3 3 6-7" fill="none" stroke="#555" strokeWidth="1.900" /></svg></IconButton>
          <IconButton aria-label="İşlev ekle"><svg width="12" height="12" viewBox="0 0 12 12"><path d="M7 1C4.500.500 4.500 3 4 6s-1 5-3 5M2 4.500h4.500M6 6.500c1.500 0 2 4 4.500 3.500M10.500 6.500L5.500 10" fill="none" stroke="#444" strokeWidth="1.200" /></svg></IconButton>
        </EditButtons>
        <FormulaBox>
          <FormulaInput aria-label="Formül çubuğu" defaultValue="Maksimum Kapasi" />
          <IconButton aria-label="Formül çubuğunu genişlet"><svg width="7" height="5" viewBox="0 0 7 5"><path d="M.500 1l3 3 3-3" fill="none" stroke="#444" strokeWidth="1.700" /></svg></IconButton>
        </FormulaBox>
      </FormulaRow>

      <SheetArea>
        <Grid>
          <colgroup>
            {widths.map((w, i) => <Col key={i} $w={w} />)}
            <col />
          </colgroup>
          <thead>
            <tr>
              <Corner><svg width="21" height="16" viewBox="0 0 21 16"><path d="M18 5v9H9z" fill="#d9d9d9" /></svg></Corner>
              {cols.map((c, i) => <ColHead key={i} scope="col" $active={c === 'G'}>{c}</ColHead>)}
            </tr>
          </thead>
          <tbody>
            {Array.from({ length: 30 }, (_, i) => <Row key={i} r={i + 1} />)}
          </tbody>
        </Grid>
        <VScroll>
          <ScrollButton aria-label="Yukarı"><svg width="6" height="3" viewBox="0 0 6 3"><path d="M0 3h6L3 0z" fill="#555" /></svg></ScrollButton>
          <VThumb />
          <ScrollButton aria-label="Aşağı"><svg width="6" height="3" viewBox="0 0 6 3"><path d="M0 0h6L3 3z" fill="#555" /></svg></ScrollButton>
        </VScroll>
      </SheetArea>

      <SheetTabs>
        <SheetNav>
          <svg width="4" height="6" viewBox="0 0 4 6"><path d="M4 0v6L0 3z" fill="#bdbdbd" /></svg>
          <svg width="4" height="6" viewBox="0 0 4 6"><path d="M0 0v6l4-3z" fill="#bdbdbd" /></svg>
        </SheetNav>
        <SheetTab>Sayfa1</SheetTab>
        <AddSheet aria-label="Yeni sayfa"><svg width="14" height="14" viewBox="0 0 14 14"><circle cx="7" cy="7" r="6" fill="none" stroke="#666" strokeWidth="1.200" /><path d="M4 7h6M7 4v6" stroke="#555" strokeWidth="1.800" /></svg></AddSheet>
        <HScroll>
          <HScrollGrip aria-label="Boyutlandır"><DotsMark /></HScrollGrip>
          <ScrollButton aria-label="Sola"><svg width="3" height="6" viewBox="0 0 3 6"><path d="M3 0v6L0 3z" fill="#555" /></svg></ScrollButton>
          <HTrack><HThumb /></HTrack>
          <ScrollButton aria-label="Sağa"><svg width="3" height="6" viewBox="0 0 3 6"><path d="M0 0v6l3-3z" fill="#555" /></svg></ScrollButton>
        </HScroll>
      </SheetTabs>

      <StatusBar>
        <span>GİR</span>
        <ViewButtons>
          <IconButton aria-label="Normal"><svg width="11" height="11" viewBox="0 0 11 11"><path d="M.500.500h10v10H.500zM.500 4h10M.500 7h10M4 .500v10M7 .500v10" fill="none" stroke="#d5e6dc" /></svg></IconButton>
          <IconButton aria-label="Sayfa düzeni"><svg width="11" height="11" viewBox="0 0 11 11"><path d="M.500.500h10v10H.500zM3 2.500h5v6H3zM4 4.500h3M4 6.500h3" fill="none" stroke="#b9d6c5" /></svg></IconButton>
          <IconButton aria-label="Sayfa sonu"><svg width="11" height="11" viewBox="0 0 11 11"><path d="M.500.500h10v10H.500z" fill="none" stroke="#d5e6dc" /><path d="M1 1h4v5H1zM6 1h2v5H6z" fill="#eef6f1" /></svg></IconButton>
        </ViewButtons>
        <ZoomSign aria-label="Uzaklaştır"><svg width="7" height="7" viewBox="0 0 7 7"><path d="M0 3.500h6" stroke="#174c30" strokeWidth="1.500" /></svg></ZoomSign>
        <ZoomSlider type="range" aria-label="Yakınlaştırma" defaultValue={50} />
        <ZoomSign aria-label="Yakınlaştır"><svg width="7" height="7" viewBox="0 0 7 7"><path d="M0 3.500h7M3.500 0v7" stroke="#174c30" strokeWidth="1.500" /></svg></ZoomSign>
        <ZoomValue>%100</ZoomValue>
      </StatusBar>

      <TaskBar>
        <StartButton aria-label="Başlat"><OrbIcon /></StartButton>
        <TaskButton aria-label="Internet Explorer"><IeIcon /></TaskButton>
        <TaskButton $open aria-label="Dosya Gezgini"><FolderIcon /></TaskButton>
        <TaskButton aria-label="Media Player"><MediaIcon /></TaskButton>
        <TaskButton $open aria-label="Chrome"><ChromeIcon /></TaskButton>
        <TaskButton aria-label="Dreamweaver"><DwIcon /></TaskButton>
        <TaskButton $open aria-label="Word"><OfficeIcon letter="W" color="#2b5797" word /></TaskButton>
        <TaskButton $open $stack aria-label="Excel"><OfficeIcon letter="X" color="#1e7145" /></TaskButton>
        <TaskButton $open aria-label="Kaydedici"><RecorderIcon /></TaskButton>
        <Tray>
          <Language>TR</Language>
          <svg width="6" height="3" viewBox="0 0 6 3"><path d="M0 3h6L3 0z" fill="#e6e6e6" /></svg>
          <svg width="12" height="12" viewBox="0 0 12 12"><path d="M1.500 0v12" stroke="#fff" strokeWidth="1.500" /><path d="M2 1h4l1 1.500h4.500L10 5l1.500 2.500H6L5 6H2z" fill="#fff" /></svg>
          <svg width="12" height="12" viewBox="0 0 12 12"><path d="M5 1v3M9 1v3M3.500 4H11v2q0 3-3 3v3" fill="#fff" stroke="#fff" strokeWidth="1.200" /><circle cx="4" cy="8.500" r="3.500" fill="#d21f2e" /><path d="M2.500 7l3 3M5.500 7l-3 3" stroke="#fff" /></svg>
          <svg width="12" height="11" viewBox="0 0 12 11"><path d="M0 8h1.500v3H0zM2.500 7H4v4H2.500zM5 5h1.500v6H5zM7.500 3H9v8H7.500zM10 1h1.500v10H10z" fill="#eee" /></svg>
          <svg width="12" height="12" viewBox="0 0 12 12"><path d="M0 4h2l3.500-3.500v11L2 8H0z" fill="#fff" /><path d="M7 4q1.500 2 0 4M9 2.500q2.500 3.500 0 7" fill="none" stroke="#ccc" /></svg>
          <Clock>16:05<br />28.08.2013</Clock>
          <ShowDesktop aria-label="Masaüstünü göster" />
        </Tray>
      </TaskBar>
    </Window>
  );
}
